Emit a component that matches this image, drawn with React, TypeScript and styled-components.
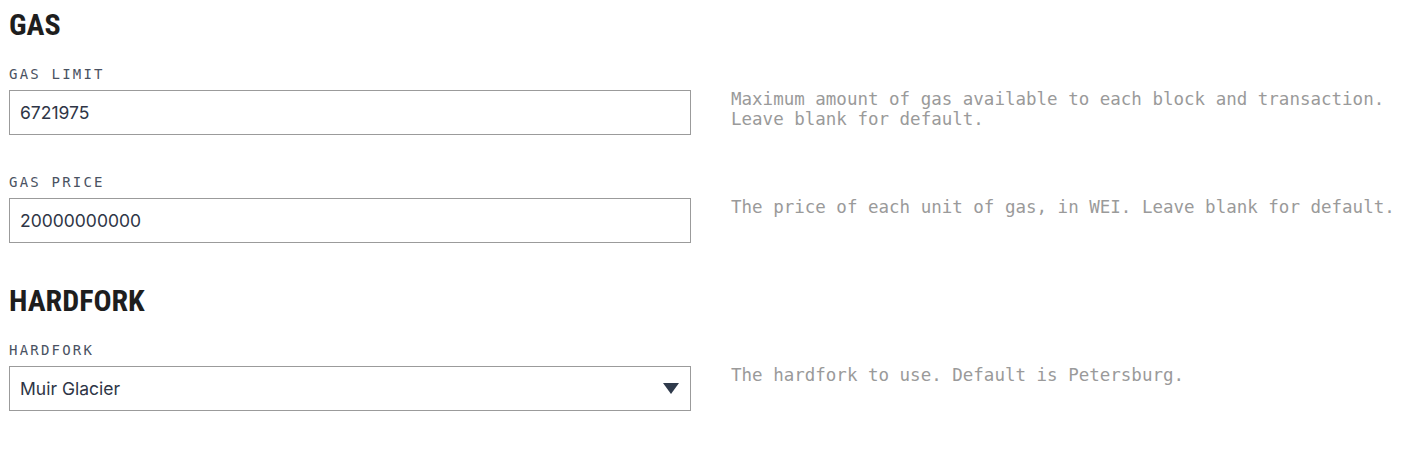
import * as React from "react"
import styled, { createGlobalStyle } from "styled-components"

type Field = {
  label: string
  value: string
  help: string
  select?: boolean
}

type Section = { title: string; fields: Field[] }

const sections: Section[] = [
  {
    title: "GAS",
    fields: [
      {
        label: "GAS LIMIT",
        value: "6721975",
        help: "Maximum amount of gas available to each block and transaction. Leave blank for default.",
      },
      {
        label: "GAS PRICE",
        value: "20000000000",
        help: "The price of each unit of gas, in WEI. Leave blank for default.",
      },
    ],
  },
  {
    title: "HARDFORK",
    fields: [
      {
        label: "HARDFORK",
        value: "Muir Glacier",
        help: "The hardfork to use. Default is Petersburg.",
        select: true,
      },
    ],
  },
]

export default function App() {
  return (
    <>
      <GlobalStyle />
      <Page>
        {sections.map((section) => (
          <SectionBlock key={section.title}>
            <SectionTitle>{section.title}</SectionTitle>
            {section.fields.map((field) => (
              <FieldRow key={field.label}>
                <Label>{field.label}</Label>
                {field.select ? (
                  <SelectBox>
                    <span>{field.value}</span>
                    <Caret viewBox="0 0 16 11" aria-hidden>
                      <path d="M0 0H16L8 11Z" />
                    </Caret>
                  </SelectBox>
                ) : (
                  <TextInput defaultValue={field.value} />
                )}
                <Help>{field.help}</Help>
              </FieldRow>
            ))}
          </SectionBlock>
        ))}
      </Page>
    </>
  )
}

const GlobalStyle = createGlobalStyle`
  html, body {
    margin: 0;
    background: #fff;
  }
`

const Page = styled.div`
  padding: 9px 0 0 9px;
  display: flex;
  flex-direction: column;
  gap: 42px;
`

const SectionBlock = styled.section`
  display: flex;
  flex-direction: column;
  gap: 39px;
`

const SectionTitle = styled.h2`
  margin: 0 0 -13px;
  font-family: "Roboto Condensed", "Liberation Sans Narrow", Roboto, sans-serif;
  font-weight: 700;
  font-size: 30px;
  line-height: 31px;
  color: #1e1e1e;
`

const FieldRow = styled.div`
  display: grid;
  grid-template-columns: 682px 1fr;
  grid-template-rows: auto auto;
  column-gap: 40px;
  row-gap: 8px;
`

const Label = styled.label`
  grid-column: 1;
  font-family: "DejaVu Sans Mono", "Liberation Mono", monospace;
  font-size: 14px;
  line-height: 16px;
  letter-spacing: 2.2px;
  color: #4a5262;
`

const fieldBox = `
  grid-column: 1;
  box-sizing: border-box;
  width: 682px;
  height: 45px;
  border: 1px solid #9b9b9b;
  background: #fff;
  padding: 0 10px;
  font-family: Inter, "Noto Sans", sans-serif;
  font-size: 17.5px;
  color: #2e3546;
`

const TextInput = styled.input`
  ${fieldBox}
  outline: none;
`

const SelectBox = styled.div`
  ${fieldBox}
  display: flex;
  align-items: center;
  justify-content: space-between;
  padding-right: 11px;
`

const Caret = styled.svg`
  width: 16px;
  height: 11px;
  fill: #2f3a4b;
`

const Help = styled.p`
  grid-column: 2;
  grid-row: 2;
  margin: -1px 0 0;
  font-family: "DejaVu Sans Mono", "Liberation Mono", monospace;
  font-size: 17.5px;
  line-height: 20px;
  color: #9a9a9a;
`
